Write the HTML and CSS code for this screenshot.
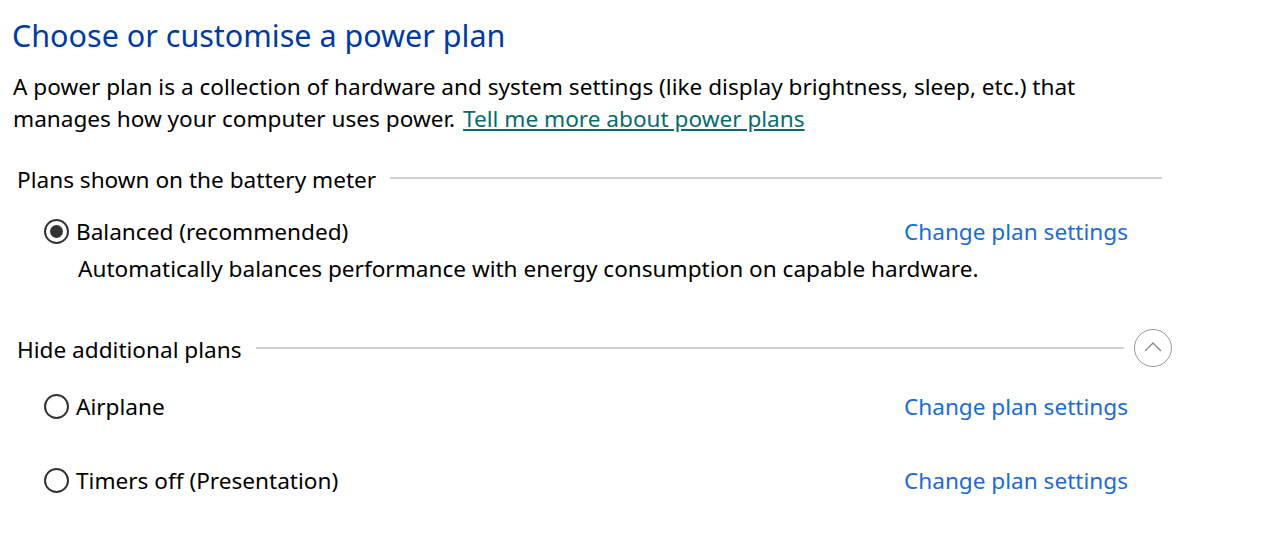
FILE: index.html
```html
<!DOCTYPE html>
<html>
<head>
    <title>Power Options</title>
    <link rel="stylesheet" href="styles.css">
</head>
<body>
    <div class="page">
        <h1>Choose or customise a power plan</h1>
        <p class="intro">A power plan is a collection of hardware and system settings (like display brightness, sleep, etc.) that manages how your computer uses power. <a href="#" class="help-link">Tell me more about power plans</a></p>

        <div class="group-header">
            <span class="group-title">Plans shown on the battery meter</span>
            <span class="group-line"></span>
        </div>
        <div class="plan">
            <label class="plan-name"><span class="radio checked"></span>Balanced (recommended)</label>
            <a href="#" class="plan-link">Change plan settings</a>
        </div>
        <div class="plan-desc">Automatically balances performance with energy consumption on capable hardware.</div>

        <div class="group-header second">
            <span class="group-title">Hide additional plans</span>
            <span class="group-line"></span>
            <span class="collapse-btn">
                <svg width="20" height="12" viewBox="0 0 20 12"><path d="M2 10 L10 2 L18 10" fill="none" stroke="#888" stroke-width="1.4"/></svg>
            </span>
        </div>
        <div class="plan first-extra">
            <label class="plan-name"><span class="radio"></span>Airplane</label>
            <a href="#" class="plan-link">Change plan settings</a>
        </div>
        <div class="plan next-extra">
            <label class="plan-name"><span class="radio"></span>Timers off (Presentation)</label>
            <a href="#" class="plan-link">Change plan settings</a>
        </div>
    </div>
</body>
</html>
```

FILE: styles.css
```css
body {
    margin: 0;
    background: #fff;
    font-family: "Noto Sans", "Open Sans", sans-serif;
    color: #000;
}
.page {
    width: 1180px;
    padding: 14px 0 0 12px;
}
h1 {
    margin: 0;
    font-size: 30.5px;
    font-weight: normal;
    color: #003aa3;
    line-height: 42px;
}
.intro {
    margin: 15px 0 0 1px;
    font-size: 22.6px;
    line-height: 32px;
    width: 1090px;
}
.help-link {
    color: #066b6b;
    text-decoration: underline;
    margin-left: 2px;
}
.group-header {
    display: flex;
    align-items: center;
    margin: 29px 0 0 5px;
    width: 1145px;
    height: 30px;
    font-size: 22.6px;
}
.group-header.second {
    width: 1155px;
    height: 38px;
    margin-top: 45px;
}
.group-title {
    margin-right: 14px;
}
.group-line {
    flex: 1;
    height: 0;
    border-top: 2px solid #d0d0d0;
    margin-top: -3px;
}
.second .group-line {
    margin-right: 10px;
}
.collapse-btn {
    width: 38px;
    height: 38px;
    border: 1px solid #999;
    border-radius: 50%;
    display: flex;
    align-items: center;
    justify-content: center;
    box-sizing: border-box;
    margin-top: -2px;
}
.collapse-btn svg {
    margin-top: -2px;
}
.plan {
    display: flex;
    justify-content: space-between;
    align-items: center;
    width: 1084px;
    margin: 21px 0 0 32px;
    height: 32px;
    font-size: 22.6px;
}
.plan.first-extra {
    margin-top: 22px;
}
.plan.next-extra {
    margin-top: 42px;
}
.plan-name {
    display: flex;
    align-items: center;
}
.radio {
    width: 25px;
    height: 25px;
    border: 2px solid #333;
    border-radius: 50%;
    box-sizing: border-box;
    margin-right: 7px;
    position: relative;
}
.radio.checked::after {
    content: "";
    position: absolute;
    left: 4px;
    top: 4px;
    width: 13px;
    height: 13px;
    border-radius: 50%;
    background: #333;
}
.plan-link {
    color: #1a6bd6;
    text-decoration: none;
}
.plan-desc {
    margin: 6px 0 0 66px;
    font-size: 22.6px;
    line-height: 32px;
}
```
